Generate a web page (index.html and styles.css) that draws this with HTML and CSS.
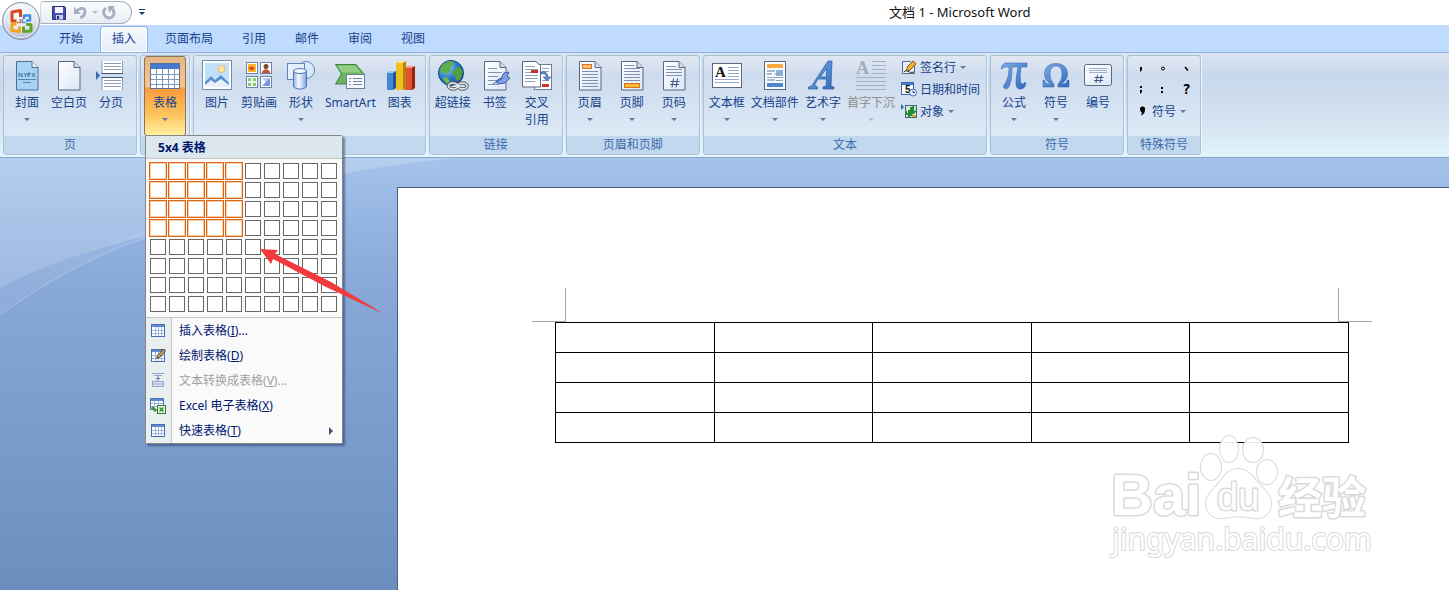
FILE: index.html
```html
<!DOCTYPE html>
<html lang="zh-CN">

<head>
    <meta charset="UTF-8" />
    <meta name="viewport" content="width=device-width, initial-scale=1.0" />
    <title>文档 1 - Microsoft Word</title>
    <link rel="stylesheet" href="styles.css">
</head>

<body>

    <!-- shared shapes -->
    <svg width="0" height="0" class="defs">
        <defs>
            <linearGradient id="gBlue" x1="0" y1="0" x2="1" y2="1">
                <stop offset="0" stop-color="#7fb0ea" />
                <stop offset="1" stop-color="#2f68b8" />
            </linearGradient>
            <linearGradient id="gPaper" x1="0" y1="0" x2="1" y2="1">
                <stop offset="0" stop-color="#ffffff" />
                <stop offset="1" stop-color="#dbe6f6" />
            </linearGradient>
            <linearGradient id="gCyl" x1="0" y1="0" x2="1" y2="0">
                <stop offset="0" stop-color="#8db4e4" />
                <stop offset="0.4" stop-color="#f4f9ff" />
                <stop offset="1" stop-color="#7ea5da" />
            </linearGradient>
            <radialGradient id="gOrb" cx="0.5" cy="0.3" r="0.75">
                <stop offset="0" stop-color="#ffffff" />
                <stop offset="0.55" stop-color="#e3e8f0" />
                <stop offset="1" stop-color="#9aa8bd" />
            </radialGradient>
            <radialGradient id="gGlobe" cx="0.35" cy="0.3" r="0.8">
                <stop offset="0" stop-color="#8fd0f8" />
                <stop offset="0.5" stop-color="#2f7bcb" />
                <stop offset="1" stop-color="#123c88" />
            </radialGradient>
            <symbol id="sheet" viewBox="0 0 32 32">
                <path d="M5.500 1.500h15.500l6 6v22.500h-21.500z" fill="url(#gPaper)" stroke="#59697f" />
                <path d="M21 1.500v6h6" fill="#cfdcef" stroke="#59697f" />
            </symbol>
            <symbol id="tbl" viewBox="0 0 16 16">
                <rect x="1.500" y="1.500" width="13" height="12" fill="#fff" stroke="#4a6fb0" />
                <rect x="2" y="2" width="12" height="2" fill="#5f8bd3" />
                <path d="M2 7.500h12M2 10.500h12M5.500 4v9M8.500 4v9M11.500 4v9" stroke="#9db8e0" />
            </symbol>
        </defs>
    </svg>

    <header class="titlebar">
        <button class="office-btn" aria-label="Office">
            <svg width="40" height="40" viewBox="0 0 40 40">
                <circle cx="20" cy="20" r="18.500" fill="url(#gOrb)" stroke="#8894a8" />
                <circle cx="20" cy="20" r="16.500" fill="none" stroke="#fff" stroke-opacity="0.8" />
                <g fill="none" stroke-width="3" stroke-linejoin="round">
                    <path d="M19.500 16v-6.500l-8.500 1.500v9h4.500" stroke="#d9481c" />
                    <path d="M23 18v-3.500h6v5h-4" stroke="#3f8ede" stroke-width="2.500" />
                    <path d="M15.500 23h-4.500v6.500l7.500 1v-5" stroke="#f2a518" />
                    <path d="M25 23.500h5v6.500l-7.500 0.500v-5" stroke="#5fa52d" />
                </g>
                <path d="M16 21.500h3.500v-3.500" fill="none" stroke="#e8722c" stroke-width="1.500" />
                <path d="M21.500 18v3.500h3.500" fill="none" stroke="#4f9be6" stroke-width="1.500" />
            </svg>
        </button>
        <div class="quick-access">
            <button aria-label="保存">
                <svg width="16" height="16" viewBox="0 0 16 16">
                    <path d="M1.500 1.500h12l1 1v12h-13z" fill="#4a4fb5" stroke="#27307f" />
                    <rect x="4" y="2" width="8" height="6" fill="#f1f4fc" />
                    <rect x="5" y="10" width="7" height="4.500" fill="#c9cfe6" />
                    <rect x="6" y="11" width="2" height="3" fill="#27307f" />
                </svg>
            </button>
            <button aria-label="撤消">
                <svg width="16" height="16" viewBox="0 0 16 16">
                    <path d="M4 6c3-4 9-3 8 1 0 3-1.500 4-4.500 6" fill="none" stroke="#a3aec2" stroke-width="2.800" />
                    <path d="M1 2v7h7z" fill="#a3aec2" />
                </svg>
            </button>
            <i class="arrow pale"></i>
            <button aria-label="恢复">
                <svg width="16" height="16" viewBox="0 0 16 16">
                    <path d="M5 3c-5 4-1 10 3 10s7-5 3.500-9" fill="none" stroke="#a3aec2" stroke-width="2.800" />
                    <path d="M7 1h7l-6 7z" fill="#a3aec2" />
                </svg>
            </button>
        </div>
        <button class="qat-more" aria-label="自定义快速访问工具栏">
            <svg width="8" height="8" viewBox="0 0 8 8">
                <path d="M1 0h6v1H1zM1 3h6L4 6z" fill="#1d3b6e" />
            </svg>
        </button>
        <h1 class="title">文档 1 - Microsoft Word</h1>
    </header>

    <nav class="tabs">
        <button>开始</button>
        <button class="active">插入</button>
        <button>页面布局</button>
        <button>引用</button>
        <button>邮件</button>
        <button>审阅</button>
        <button>视图</button>
    </nav>

    <section class="ribbon">
        <div class="group">
            <div class="items">
                <button class="tool">
                    <svg width="32" height="32" viewBox="0 0 32 32">
                        <path d="M5.500 1.500h15.500l6 6v22.500h-21.500z" fill="#a9d3f1" stroke="#4b7199" />
                        <path d="M21 1.500v6h6" fill="#e6f3fc" stroke="#4b7199" />
                        <path d="M8 17v-4l3 4v-4M13 13l1.500 2 1.500-2M14.500 15v2M17 17v-4h2v2h-2M21 17l3-4M21 13l3 4" fill="none" stroke="#43749f" />
                        <path d="M7 19.500h18M12 22.500h8" stroke="#4f86b5" />
                    </svg>
                    <span>封面</span><i class="arrow"></i>
                </button>
                <button class="tool">
                    <svg width="32" height="32"><use href="#sheet" /></svg>
                    <span>空白页</span>
                </button>
                <button class="tool">
                    <svg width="32" height="32" viewBox="0 0 32 32">
                        <path d="M7 1v12.500h20.500v-12.500M7 30v-12.500h20.500v12.500" fill="#fff" stroke="#8a9cb8" />
                        <path d="M9 3.500h17M9 6.500h17M9 9.500h17M9 20.500h17M9 23.500h17M9 26.500h17" stroke="#8b9bb5" />
                        <path d="M6.500 13.500h21.500M6.500 17.500h21.500" stroke="#3f5270" />
                        <path d="M1 11v9l4-4.500z" fill="#3b66b0" />
                    </svg>
                    <span>分页</span>
                </button>
            </div>
            <h2>页</h2>
        </div>

        <div class="group">
            <div class="items single">
                <button class="tool pressed" aria-expanded="true">
                    <svg width="32" height="32" viewBox="0 0 32 32">
                        <rect x="1.500" y="3.500" width="29" height="25" fill="#fff" stroke="#56749f" />
                        <rect x="2" y="4" width="28" height="5" fill="#4478cd" />
                        <path d="M2 14.500h28M2 19.500h28M2 24.500h28M7.500 9v19M13.500 9v19M19.500 9v19M25.500 9v19" stroke="#7f97bd" />
                    </svg>
                    <span>表格</span><i class="arrow"></i>
                </button>
            </div>
            <h2></h2>

            <div class="dropdown">
                <h3>5x4 表格</h3>
                <div class="picker" id="picker"></div>
                <div class="menu">
                    <button>
                        <svg width="16" height="16"><use href="#tbl" /></svg>
                        <span>插入表格(<u>I</u>)...</span>
                    </button>
                    <button>
                        <svg width="16" height="16" viewBox="0 0 16 16">
                            <use href="#tbl" />
                            <path d="M6.500 10.500l1-3 6-6.500 2 2-6 6.500z" fill="#c99a62" stroke="#5b4630" />
                        </svg>
                        <span>绘制表格(<u>D</u>)</span>
                    </button>
                    <button disabled>
                        <svg width="16" height="16" viewBox="0 0 16 16">
                            <path d="M2 0.500h12M4 2.500h8" stroke="#8fa3c4" />
                            <path d="M8 3v5M6 5.500h4" stroke="#6a7fa6" />
                            <rect x="2.500" y="8.500" width="11" height="5" fill="#dfe7f3" stroke="#8fa3c4" />
                            <path d="M3 11h10" stroke="#8fa3c4" />
                        </svg>
                        <span>文本转换成表格(<u>V</u>)...</span>
                    </button>
                    <button>
                        <svg width="16" height="16" viewBox="0 0 16 16">
                            <path d="M0.500 0.500h13v11h-13z" fill="#fff" stroke="#4a6fb0" />
                            <path d="M1 2h12" stroke="#5f8bd3" stroke-width="2" />
                            <path d="M1 5.500h12M1 8.500h12M4.500 3v8M8.500 3v8" stroke="#9db8e0" />
                            <path d="M2 9l4 4" stroke="#47933f" stroke-width="3" />
                            <rect x="7.500" y="7.500" width="8" height="8" fill="#eaf5e5" stroke="#2f7d32" />
                            <path d="M9.500 9.500l4 4M13.500 9.500l-4 4" stroke="#2f8f35" stroke-width="1.500" />
                        </svg>
                        <span>Excel 电子表格(<u>X</u>)</span>
                    </button>
                    <button class="has-sub">
                        <svg width="16" height="16"><use href="#tbl" /></svg>
                        <span>快速表格(<u>T</u>)</span>
                    </button>
                </div>
                <svg class="pointer" width="126" height="66" viewBox="0 0 126 66">
                    <path d="M0 0l18 1-3 4 56 28 53 32-58-27-53-28-2 5z" fill="#f03a3c" />
                </svg>
            </div>
        </div>

        <div class="group">
            <div class="items">
                <button class="tool">
                    <svg width="32" height="32" viewBox="0 0 32 32">
                        <rect x="1.500" y="0.500" width="29" height="29" fill="#fff" stroke="#6a8fb8" />
                        <rect x="4" y="3" width="24" height="24" fill="#bfe1fb" />
                        <circle cx="20.500" cy="9" r="3.500" fill="#ffe3a8" stroke="#f1b860" />
                        <path d="M4 22l6-6 4 4 6-5 8 8v4H4z" fill="#5d8fce" />
                        <path d="M4 25l6-5 4 3 6-4 8 6v2H4z" fill="#e6f0fb" />
                    </svg>
                    <span>图片</span>
                </button>
                <button class="tool">
                    <svg width="32" height="32" viewBox="0 0 32 32">
                        <g fill="#fff" stroke="#6f83a6">
                            <rect x="3.500" y="2.500" width="11" height="11" />
                            <rect x="17.500" y="2.500" width="11" height="11" />
                            <rect x="3.500" y="16.500" width="11" height="11" />
                            <rect x="17.500" y="16.500" width="11" height="11" />
                        </g>
                        <path d="M5 4h8v8H5z" fill="#f9b932" />
                        <path d="M5 8l4-2 3 2-3 3z" fill="#df501e" />
                        <circle cx="23" cy="6.500" r="2.500" fill="#7a4a2e" />
                        <path d="M19 13c0-5 8-5 8 0z" fill="#c9502e" />
                        <path d="M5 18h8v8H5z" fill="#8dcb77" />
                        <path d="M9 18v8M5 22h8" stroke="#fff" stroke-width="1.500" />
                        <path d="M19 18h8v8z" fill="#b8c9f2" />
                        <path d="M19 26l8-8v8z" fill="#7b96dc" />
                    </svg>
                    <span>剪贴画</span>
                </button>
                <button class="tool">
                    <svg width="32" height="32" viewBox="0 0 32 32">
                        <circle cx="21" cy="10" r="8.500" fill="#dce9fa" stroke="#5f85bd" />
                        <rect x="2.500" y="3.500" width="17" height="16" fill="#e6f0fc" stroke="#5f85bd" />
                        <path d="M8.500 11v15c0 4 13 4 13 0v-15z" fill="url(#gCyl)" stroke="#4f78b5" />
                        <ellipse cx="15" cy="11" rx="6.500" ry="2.500" fill="#f3f8ff" stroke="#4f78b5" />
                    </svg>
                    <span>形状</span><i class="arrow"></i>
                </button>
                <button class="tool">
                    <svg width="32" height="32" viewBox="0 0 32 32">
                        <path d="M1.500 4.500h20.500l8 9.500-7 10h-21.500l6-10z" fill="#6db35f" stroke="#3f8240" />
                        <path d="M3 5.500h18l6 7h-19z" fill="#a2d891" opacity="0.700" />
                        <rect x="12.500" y="14.500" width="18" height="14" fill="#f8fafd" stroke="#6b7f9c" />
                        <path d="M15 18.500h2M15 21.500h2M15 24.500h2M19 18.500h9M19 21.500h9M19 24.500h9" stroke="#6f85a8" />
                    </svg>
                    <span>SmartArt</span>
                </button>
                <button class="tool">
                    <svg width="32" height="32" viewBox="0 0 32 32">
                        <path d="M3 13l3-2h6v17l-3 2h-6z" fill="#1d5596" />
                        <path d="M3 13h6v17h-6z" fill="#4189d4" />
                        <path d="M3 13l3-2h6l-3 2z" fill="#9cc8f0" />
                        <path d="M21 8l3-2h7v22l-3 2h-7z" fill="#96220c" />
                        <path d="M21 8h7v22h-7z" fill="#e2512f" />
                        <path d="M21 8l3-2h7l-3 2z" fill="#f59f83" />
                        <path d="M12 3l3-2h7v27l-3 2h-7z" fill="#b88400" />
                        <path d="M12 3h7v27h-7z" fill="#f0be1e" />
                        <path d="M12 3l3-2h7l-3 2z" fill="#ffe68c" />
                    </svg>
                    <span>图表</span>
                </button>
            </div>
            <h2></h2>
        </div>

        <div class="group">
            <div class="items">
                <button class="tool">
                    <svg width="32" height="32" viewBox="0 0 32 32">
                        <circle cx="14" cy="13" r="12.500" fill="url(#gGlobe)" stroke="#174487" />
                        <path d="M4 7c3-5 8-6 11-6l2 3-4 3 1 3-4 4-3-2-4 2z" fill="#5fae48" />
                        <path d="M17 10l5-4 4 6-3 8-4 1-1-5-3-2z" fill="#4fa03d" />
                        <path d="M6 17l5 1 2 4-2 2c-3-1-5-4-5-7z" fill="#6cbb50" />
                        <g fill="none" stroke="#5e646c" stroke-width="3.500">
                            <ellipse cx="16" cy="26" rx="4.500" ry="3" />
                            <ellipse cx="25.500" cy="26" rx="4.500" ry="3" />
                        </g>
                        <g fill="none" stroke="#eceff2" stroke-width="1.500">
                            <ellipse cx="16" cy="26" rx="4.500" ry="3" />
                            <ellipse cx="25.500" cy="26" rx="4.500" ry="3" />
                            <path d="M17 26h7" />
                        </g>
                    </svg>
                    <span>超链接</span>
                </button>
                <button class="tool">
                    <svg width="32" height="32" viewBox="0 0 32 32">
                        <use href="#sheet" />
                        <path d="M9 8.500h9M9 12.500h14M9 16.500h10M9 20.500h8M9 24.500h10" stroke="#8194b3" />
                        <path d="M17 21l5-3 3-5 5-1-2 4 3 2-5 5-7 1z" fill="#7f9fe0" stroke="#3d5eae" />
                        <path d="M14 24l10-6" stroke="#3d5eae" />
                    </svg>
                    <span>书签</span>
                </button>
                <button class="tool">
                    <svg width="32" height="32" viewBox="0 0 32 32">
                        <rect x="13.500" y="4.500" width="17" height="25" fill="#fff" stroke="#6e7f99" />
                        <path d="M21 8.500h7M21 11.500h7M21 20.500h7" stroke="#8fa1bd" />
                        <path d="M21 24h7v3h-7z" fill="#cf2f26" />
                        <path d="M1.500 1.500h13l5 4v21.500h-18z" fill="#fff" stroke="#59697f" />
                        <path d="M4 6.500h10M4 9.500h13M4 12.500h6M4 15.500h13M4 18.500h13M4 21.500h10" stroke="#8fa1bd" />
                        <path d="M10 10h7v3h-7z" fill="#cf2f26" />
                        <path d="M20 14c4-1 5 1 5 3h-3l4 4 4-4h-3c0-4-3-6-7-5z" fill="#5e86cf" stroke="#33579f" stroke-width="0.500" />
                    </svg>
                    <span>交叉<br>引用</span>
                </button>
            </div>
            <h2>链接</h2>
        </div>

        <div class="group">
            <div class="items">
                <button class="tool">
                    <svg width="32" height="32" viewBox="0 0 32 32">
                        <use href="#sheet" />
                        <path d="M8 11.500h16M8 14.500h16M8 17.500h16M8 20.500h16M8 23.500h16M8 26.500h16" stroke="#7d92b4" />
                        <rect x="8.500" y="4.500" width="9" height="4" fill="#fbc377" stroke="#d9731a" />
                    </svg>
                    <span>页眉</span><i class="arrow"></i>
                </button>
                <button class="tool">
                    <svg width="32" height="32" viewBox="0 0 32 32">
                        <use href="#sheet" />
                        <path d="M8 5.500h10M8 8.500h16M8 11.500h16M8 14.500h16M8 17.500h16M8 20.500h16" stroke="#7d92b4" />
                        <rect x="8.500" y="23.500" width="15" height="4" fill="#fbb93d" stroke="#d9731a" />
                    </svg>
                    <span>页脚</span><i class="arrow"></i>
                </button>
                <button class="tool">
                    <svg width="32" height="32" viewBox="0 0 32 32">
                        <use href="#sheet" />
                        <path d="M8 6.500h10M8 9.500h16M8 12.500h16M8 15.500h16" stroke="#7d92b4" />
                        <path d="M15.500 18.500l-1.500 9M19.500 18.500l-1.500 9M12.500 21.500h9M12 24.500h9" stroke="#3b5689" />
                    </svg>
                    <span>页码</span><i class="arrow"></i>
                </button>
            </div>
            <h2>页眉和页脚</h2>
        </div>

        <div class="group">
            <div class="items">
                <button class="tool">
                    <svg width="32" height="32" viewBox="0 0 32 32">
                        <rect x="1.500" y="3.500" width="29" height="24" fill="#fff" stroke="#59697f" />
                        <path d="M17 7.500h11M17 10.500h11M17 13.500h11M17 16.500h11M4 19.500h24M4 22.500h24" stroke="#93aace" />
                        <text x="4" y="17" class="glyph" font-size="15" fill="#111">A</text>
                    </svg>
                    <span>文本框</span><i class="arrow"></i>
                </button>
                <button class="tool">
                    <svg width="32" height="32" viewBox="0 0 32 32">
                        <rect x="5.500" y="1.500" width="21" height="28" fill="#f7faff" stroke="#59697f" />
                        <rect x="8" y="4" width="16" height="4" fill="#f7a93c" />
                        <path d="M8 11h8M8 14h5M8 20h8" stroke="#92a3bd" stroke-width="1.500" />
                        <rect x="17" y="10" width="7" height="6" fill="#86b1e4" />
                        <path d="M15 14h9M8 17.500h16M17 20.500h7" stroke="#92a3bd" />
                        <rect x="8" y="23" width="16" height="4" fill="#4f86d2" />
                    </svg>
                    <span>文档部件</span><i class="arrow"></i>
                </button>
                <button class="tool">
                    <svg width="32" height="32" viewBox="0 0 32 32">
                        <path d="M21 1h4l-1 25 3 1v2h-11v-2l3-1 0.500-7h-8.500l-3.500 6 3 2v2h-9v-2l3-1zM19.800 8l-6.500 9h6z" fill="url(#gBlue)" fill-rule="evenodd" stroke="#2a5ca8" stroke-width="0.700" />
                    </svg>
                    <span>艺术字</span><i class="arrow"></i>
                </button>
                <button class="tool" disabled>
                    <svg width="32" height="32" viewBox="0 0 32 32">
                        <text x="1" y="14" class="glyph" font-size="18" fill="#a0adbf">A</text>
                        <path d="M17 1.500h14M17 5.500h14M17 9.500h14M17 13.500h14M1 17.500h30M1 21.500h30M1 25.500h30M1 29.500h30" stroke="#a4b2c6" />
                    </svg>
                    <span>首字下沉</span><i class="arrow"></i>
                </button>
                <div class="small-tools">
                    <button>
                        <svg width="16" height="16" viewBox="0 0 16 16">
                            <path d="M1.500 2.500h8l4 4v8h-12z" fill="#e8eefa" stroke="#59697f" />
                            <path d="M3 13c3-4 4 2 10 0" fill="none" stroke="#333" />
                            <path d="M5 12l2-5 5-5 3 3-6 6z" fill="#f2b236" stroke="#7a4d18" />
                        </svg>
                        <span>签名行</span><i class="arrow"></i>
                    </button>
                    <button>
                        <svg width="16" height="16" viewBox="0 0 16 16">
                            <rect x="0.500" y="1.500" width="12" height="12" fill="#fff" stroke="#3d62ac" />
                            <path d="M1 3h11" stroke="#4a7bd0" stroke-width="2" />
                            <text x="4" y="12" class="digit" font-size="10" fill="#111">5</text>
                            <circle cx="12" cy="11.500" r="3.500" fill="#e7effb" stroke="#4c72b5" />
                            <path d="M12 9.500v2h2" fill="none" stroke="#27427c" />
                        </svg>
                        <span>日期和时间</span>
                    </button>
                    <button>
                        <svg width="16" height="16" viewBox="0 0 16 16">
                            <path d="M0 1v6l3-3z" fill="#2f66c0" />
                            <rect x="4.500" y="2.500" width="11" height="12" fill="#d9e9c6" stroke="#41638f" />
                            <path d="M8 14V7M8 11H5V8M10 13V5l2-1v6l3-2" fill="none" stroke="#238a37" stroke-width="2" />
                            <path d="M11 13h4" stroke="#d3a624" stroke-width="2" />
                        </svg>
                        <span>对象</span><i class="arrow"></i>
                    </button>
                </div>
            </div>
            <h2>文本</h2>
        </div>

        <div class="group">
            <div class="items">
                <button class="tool">
                    <svg width="32" height="32" viewBox="0 0 32 32">
                        <path d="M3 9c1-5 3-6 6-6h20v4h-6c-1 9-1 13 0 16 1 2 3 1 4-1l1 1c-1 5-3 6-6 6-5 0-5-6-2-22h-6c0 10-1 17-4 21-2 2-6 0-4-3 3-4 5-9 5-18-4 0-6 0-7 2z" fill="url(#gBlue)" stroke="#2d5fa9" stroke-width="0.500" />
                    </svg>
                    <span>公式</span><i class="arrow"></i>
                </button>
                <button class="tool">
                    <svg width="32" height="32" viewBox="0 0 32 32">
                        <path d="M3 20h1.500c1 3 2 4 6 4-4-3-6-6-6-10 0-7 5-10.500 11.500-10.500s11.500 3.500 11.500 10.500c0 4-2 7-6 10 4 0 5-1 6-4h1.500v7h-11v-3c3-3 4-6 4-10 0-5-2-8-6-8s-6 3-6 8c0 4 1 7 4 10v3H3z" fill="url(#gBlue)" stroke="#2d5fa9" stroke-width="0.500" />
                    </svg>
                    <span>符号</span><i class="arrow"></i>
                </button>
                <button class="tool">
                    <svg width="32" height="32" viewBox="0 0 32 32">
                        <rect x="2.500" y="4.500" width="27" height="21" rx="2" fill="url(#gPaper)" stroke="#59697f" />
                        <path d="M7 8.500h18M7 10.500h18M7 12.500h18" stroke="#a2b1c9" />
                        <path d="M15.500 15l-1.500 8M19.500 15l-1.500 8M12.500 17.500h9M12 20.500h9" stroke="#3b5689" />
                    </svg>
                    <span>编号</span>
                </button>
            </div>
            <h2>符号</h2>
        </div>

        <div class="group">
            <div class="marks">
                <button aria-label="逗号"><svg width="16" height="16" viewBox="0 0 16 16"><path d="M8 8h2v3l-2 2z" /></svg></button>
                <button aria-label="句号"><svg width="16" height="16" viewBox="0 0 16 16"><circle cx="8" cy="9.500" r="1.500" fill="none" stroke="#000" /></svg></button>
                <button aria-label="顿号"><svg width="16" height="16" viewBox="0 0 16 16"><path d="M7 8l3 3.500" stroke="#000" stroke-width="1.500" /></svg></button>
                <button aria-label="分号"><svg width="16" height="16" viewBox="0 0 16 16"><path d="M8 5h2v2H8zM8 9h2v2l-2 2z" /></svg></button>
                <button aria-label="冒号"><svg width="16" height="16" viewBox="0 0 16 16"><path d="M6 6h2v2H6zM6 10h2v2H6z" /></svg></button>
                <button class="question">?</button>
                <button class="mark-menu">
                    <svg width="16" height="16" viewBox="0 0 16 16"><path d="M8 5.500a2.500 2.500 0 0 1 5 1c0 3-1 5-4 6l1-3c-1 0-2-2-2-4z" /></svg>
                    <span>符号</span><i class="arrow"></i>
                </button>
            </div>
            <h2>特殊符号</h2>
        </div>
    </section>

    <main class="workspace">
        <svg class="swoosh" viewBox="0 0 480 160" width="480" height="160">
            <path d="M0 0h460C310 12 210 50 145 78 80 94 30 114 0 130z" fill="#fff" opacity="0.200" />
            <path d="M0 157C40 128 90 98 145 80L300 30C210 50 70 95 0 130z" fill="#fff" opacity="0.080" />
            <path d="M0 157C40 128 90 98 145 80" fill="none" stroke="#fff" opacity="0.250" />
        </svg>

        <article class="page">
            <div class="corners">
                <span class="corner left"></span>
                <span class="corner right"></span>
            </div>
            <table>
                <tbody>
                    <tr><td></td><td></td><td></td><td></td><td></td></tr>
                    <tr><td></td><td></td><td></td><td></td><td></td></tr>
                    <tr><td></td><td></td><td></td><td></td><td></td></tr>
                    <tr><td></td><td></td><td></td><td></td><td></td></tr>
                </tbody>
            </table>
        </article>

        <svg class="watermark" width="270" height="135" viewBox="0 0 270 135">
            <g fill="#fff" stroke="#d6d6d6" stroke-width="3" paint-order="stroke" stroke-linejoin="round">
                <text x="1" y="82" class="wm-bold" font-size="58">Bai</text>
                <g stroke-width="2">
                    <ellipse cx="101" cy="34" rx="10" ry="13" />
                    <ellipse cx="119" cy="16" rx="9" ry="13" />
                    <ellipse cx="143" cy="17" rx="10" ry="12" />
                    <ellipse cx="157" cy="39" rx="10" ry="12" />
                    <path d="M128 36c9 0 14 6 20 14 6 7 14 12 13 22-1 10-9 14-17 13-11-2-20-2-31 0-9 1-16-4-17-13-1-9 7-15 13-22 6-8 10-14 19-14z" />
                </g>
                <text x="107" y="77" class="wm-du" font-size="38">du</text>
                <text x="168" y="81" class="wm-cjk" font-size="44">经验</text>
                <text x="2" y="117" class="wm-url" font-size="30" stroke-width="2">jingyan.baidu.com</text>
            </g>
        </svg>
    </main>

    <script>
        const COLS = 10;
        const ROWS = 8;
        const picked = { cols: 5, rows: 4 };

        const picker = document.getElementById("picker");
        for (let r = 1; r <= ROWS; r++) {
            for (let c = 1; c <= COLS; c++) {
                const cell = document.createElement("button");
                cell.setAttribute("aria-label", `${c}x${r}`);
                if (c <= picked.cols && r <= picked.rows) {
                    cell.className = "on";
                }
                picker.appendChild(cell);
            }
        }
    </script>

</body>

</html>
```
FILE: styles.css
```css
* {
    box-sizing: border-box;
}

body {
    margin: 0;
    min-height: 100vh;
    display: flex;
    flex-direction: column;
    overflow: hidden;
    font-family: 'Noto Sans', 'Noto Sans CJK SC', sans-serif;
    font-size: 12px;
    line-height: 17px;
    color: #15428b;
    background: #bfdbff;
}

button {
    margin: 0;
    padding: 0;
    border: none;
    background: none;
    font: inherit;
    color: inherit;
    cursor: pointer;
}

h1,
h2,
h3 {
    margin: 0;
    font-size: 12px;
    font-weight: normal;
}

svg {
    display: block;
    flex: none;
    overflow: visible;
}

.defs {
    position: absolute;
}

.arrow {
    width: 0;
    height: 0;
    border: 3px solid transparent;
    border-top-color: #5d7ba6;
    border-bottom: none;
}

.arrow.pale {
    border-top-color: #b4bccb;
}

.glyph {
    font-family: 'Liberation Serif', serif;
    font-weight: bold;
}

.digit {
    font-family: 'Liberation Sans', sans-serif;
    font-weight: bold;
}

/* title bar */
.titlebar {
    position: relative;
    display: flex;
    align-items: center;
    height: 25px;
    padding-left: 40px;
    background: #fff;
}

.office-btn {
    position: absolute;
    top: 1px;
    left: 1px;
    z-index: 3;
}

.quick-access {
    display: flex;
    align-items: center;
    gap: 6px;
    width: 92px;
    height: 23px;
    padding-left: 10px;
    border: 1px solid #a9b0bb;
    border-left-color: #d5d9df;
    border-radius: 4px 12px 12px 0;
    background: linear-gradient(#fbfcfd, #e9edf3);
}

.quick-access .arrow {
    margin: 0 -3px;
}

.qat-more {
    padding: 0 6px;
}

.title {
    margin-left: 737px;
    font-size: 13px;
    color: #111;
    white-space: nowrap;
}

/* tabs */
.tabs {
    display: flex;
    align-items: flex-end;
    gap: 5px;
    height: 27px;
    padding-left: 47px;
    background: #bfdbff;
}

.tabs button {
    height: 26px;
    padding: 0 11px 2px;
    border: 1px solid transparent;
    border-bottom: none;
    border-radius: 4px 4px 0 0;
}

.tabs .active {
    border-color: #8db2e3;
    background: linear-gradient(#f5faff, #e2ecf8);
    box-shadow: inset 0 0 0 1px #fff;
}

/* ribbon */
.ribbon {
    position: relative;
    z-index: 2;
    display: flex;
    gap: 3px;
    height: 106px;
    padding: 2px 3px;
    border: 1px solid #8db2e3;
    border-left-width: 0;
    border-right-width: 0;
    border-bottom-color: #84a9cc;
    background: linear-gradient(#dbe4f0, #c8d8ed 20%, #cddcec 40%, #d6e5f2 70%, #e0f5fb);
}

.group {
    position: relative;
    display: flex;
    flex-direction: column;
    height: 100px;
    border: 1px solid #a8c1db;
    border-radius: 3px;
    background: linear-gradient(#dfe7f2, #d6e0ef 14%, #cddbee 18%, #dce8f5 80%);
    box-shadow: 1px 1px 0 #eef6fd;
}

.group h2 {
    height: 18px;
    background: #c2d8ef;
    color: #3e6aaa;
    line-height: 18px;
    text-align: center;
}

.items {
    display: flex;
    height: 80px;
    padding: 0 4px 0 2px;
}

.items.single {
    padding: 0 3px;
}

.tool {
    display: flex;
    flex-direction: column;
    align-items: center;
    min-width: 42px;
    padding: 3px 2px 0;
    border: 1px solid transparent;
    border-radius: 3px;
    white-space: nowrap;
}

.tool span {
    margin-top: 2px;
}

.tool .arrow {
    margin-top: 7px;
}

.tool:disabled {
    color: #8d8d8d;
}

.tool:disabled .arrow {
    border-top-color: #b4bccb;
}

.tool.pressed {
    border-color: #8b7654;
    background: linear-gradient(#e3b787, #fbc28b 38%, #fb9b3c 40%, #fdc55f 75%, #fff0a0);
}

.small-tools {
    display: flex;
    flex-direction: column;
    padding: 0 2px 0 3px;
}

.small-tools button {
    display: flex;
    align-items: center;
    gap: 3px;
    height: 22px;
}

.small-tools .arrow {
    margin-left: 1px;
}

.marks {
    display: grid;
    grid-template-columns: repeat(3, 23px);
    grid-auto-rows: 22px;
    height: 80px;
    padding: 0 2px 0 1px;
}

.marks button {
    display: flex;
    align-items: center;
    justify-content: center;
}

.marks .question {
    font-family: 'DejaVu Sans Mono', monospace;
    font-weight: bold;
    font-size: 14px;
    color: #000;
}

.marks .mark-menu {
    grid-column: span 3;
    justify-content: flex-start;
    gap: 4px;
    padding-left: 3px;
}

/* table drop-down */
.dropdown {
    position: absolute;
    top: 79px;
    left: 4px;
    z-index: 5;
    width: 198px;
    border: 1px solid #868686;
    border-radius: 2px;
    background: #fafafa;
    box-shadow: 2px 2px 2px rgba(30, 50, 90, 0.5);
    color: #00156e;
}

.dropdown h3 {
    height: 23px;
    padding-left: 12px;
    border-bottom: 1px solid #c5c5c5;
    background: #dde7ee;
    font-weight: bold;
    line-height: 23px;
}

.picker {
    display: grid;
    grid-template-columns: repeat(10, 16px);
    grid-auto-rows: 16px;
    gap: 3px;
    padding: 4px 4px 5px;
}

.picker button {
    border: 1px solid #686868;
    background: #fff;
}

.picker .on {
    border-color: #fbcf9c;
    outline: 1px solid #d9651f;
}

.menu {
    display: flex;
    flex-direction: column;
    border-top: 1px solid #c5c5c5;
    background: linear-gradient(to right, #e9eeee 25px, #c5c5c5 25px, #c5c5c5 26px, #fafafa 26px);
}

.menu button {
    display: flex;
    align-items: center;
    gap: 13px;
    height: 25px;
    padding-left: 4px;
    white-space: nowrap;
}

.menu button:disabled {
    color: #a0a0a0;
}

.menu .has-sub::after {
    content: "";
    margin-left: auto;
    margin-right: 9px;
    border: 4px solid transparent;
    border-left-color: #3f4f76;
    border-right: none;
}

.pointer {
    position: absolute;
    top: 113px;
    left: 114px;
    pointer-events: none;
}

/* document area */
.workspace {
    position: relative;
    flex: 1;
    display: flex;
    padding: 29px 0 0 397px;
    background: linear-gradient(#a5c3ea, #94b4e2 15%, #86a7d8 32%, #6c8ebf);
}

.swoosh {
    position: absolute;
    top: 0;
    left: 0;
}

.page {
    position: relative;
    flex: 1;
    padding: 100px 77px 0 134px;
    border: 1px solid #4d5f7a;
    border-width: 1px 0 0 1px;
    background: #fff;
}

.corners {
    display: flex;
    justify-content: space-between;
}

.corner {
    width: 34px;
    height: 34px;
    border: 0 solid #a5a5a5;
    border-bottom-width: 1px;
}

.corner.left {
    border-right-width: 1px;
}

.corner.right {
    border-left-width: 1px;
}

.page table {
    width: calc(100% - 46px);
    margin: 0 23px;
    border-collapse: collapse;
    table-layout: fixed;
}

.page td {
    height: 30px;
    padding: 0;
    border: 1px solid #000;
}

.watermark {
    position: absolute;
    right: 69px;
    bottom: 22px;
    opacity: 0.9;
}

.wm-bold {
    font-family: 'Liberation Sans', sans-serif;
    font-weight: bold;
}

.wm-du {
    font-family: 'Liberation Sans', sans-serif;
}

.wm-cjk {
    font-family: 'Noto Sans CJK SC', sans-serif;
    font-weight: bold;
}

.wm-url {
    font-family: 'Noto Sans', sans-serif;
}
```
